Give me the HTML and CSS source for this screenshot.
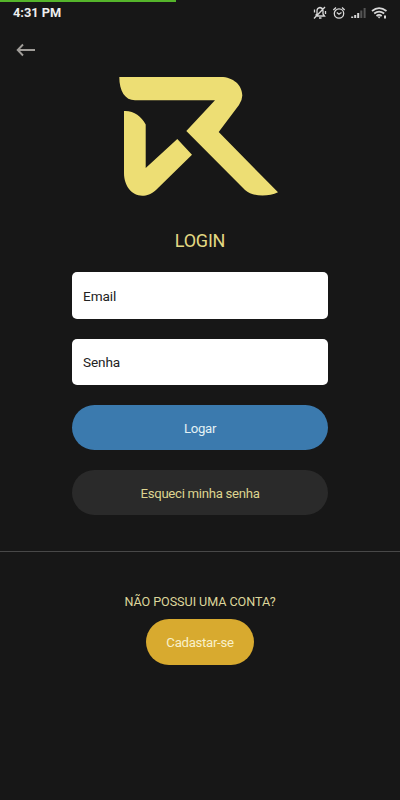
FILE: index.html
```html
<!DOCTYPE html>
<html lang="pt-BR">
<head>
<meta charset="utf-8">
<title>Login</title>
<link rel="stylesheet" href="styles.css">
</head>
<body>
<div class="progress"></div>
<header class="status">
  <span class="time">4:31 PM</span>
  <svg class="status-icons" width="76" height="16" viewBox="0 0 76 16" fill="none" stroke="#d8d8d8" stroke-width="1.3">
    <path d="M3.500 10.500L5 9V5.500Q5.200 3 8 2.500Q11 3 11 6V9L12.500 11H5M7 13H9.500M2 13.500L13 2M2.500 4.500V7.500M13.500 6V9"/>
    <circle cx="27" cy="8.500" r="4.700"/>
    <path d="M24.800 7.500L27 9.300L29.500 7.500M21.300 5L24 2.500M30 2.500L32.700 5"/>
    <path d="M40.200 13V11.500M43.200 13V10M46.200 13V8" stroke-width="2"/>
    <path d="M49.300 13V5.500M52.600 13V3" stroke="#555" stroke-width="2"/>
    <path d="M60 6Q67 .2 74.500 6M62.200 8.500Q67 4.600 72.200 8.500M64.500 11Q67 8.800 69.700 11" stroke-width="1.700"/>
    <path d="M65.500 11.500H68.700L67.100 13.500Z" fill="#d8d8d8" stroke="none"/>
    <path d="M73 10.500V13.500" stroke-width="2"/>
  </svg>
</header>
<nav class="nav">
  <svg width="20" height="14" viewBox="0 0 20 14" fill="none" stroke="#a09d99" stroke-width="1.900"><path d="M7 1.500L1.700 7L7 12.500M1.500 7H19"/></svg>
</nav>
<main class="main">
  <svg class="logo" width="160" height="120" viewBox="0 0 160 120" fill="#edde74">
    <path d="M.3 0H102C114 0 123.300 8 123.300 18.500Q123.300 23 120 28L99.700 55L159 115.300C149 120 134 120 126 113L67.300 54L96 23.300H16C6 23.300.3 14 .3 0Z"/>
    <path d="M5 34C15 33.500 22 39 26.700 47.500V91L58.300 62L73 77.700L37 113C32 117.500 28 118.700 23.300 118.700C13 118.700 5 109 5 96Z"/>
  </svg>
  <h1 class="title">LOGIN</h1>
  <form class="form">
    <div class="field">Email</div>
    <div class="field">Senha</div>
    <div class="btn btn-login">Logar</div>
    <div class="btn btn-forgot">Esqueci minha senha</div>
  </form>
</main>
<footer class="signup">
  <p class="question">NÃO POSSUI UMA CONTA?</p>
  <div class="btn btn-signup">Cadastar-se</div>
</footer>
</body>
</html>
```
FILE: styles.css
```css
* { box-sizing: border-box; }
body {
  margin: 0;
  height: 800px;
  background: #171717;
  font-family: Roboto, sans-serif;
  font-size: 13px;
  overflow: hidden;
}
svg { display: block; }
.progress { width: 176px; height: 2px; background: #55b52b; }
.status {
  height: 22px;
  display: flex;
  align-items: center;
  justify-content: space-between;
  padding: 0 12px 0 13px;
}
.time { color: #eee; font-size: 12.800px; font-weight: 700; margin-top: -1px; }
.nav { height: 53px; padding: 19px 0 0 16px; }
.main { display: flex; flex-direction: column; align-items: center; }
.logo { margin-right: 2px; }
.title {
  margin: 33px 0 20px;
  color: #e3d983;
  font-size: 18px;
  font-weight: 400;
  line-height: 22px;
  letter-spacing: -.2px;
}
.form { width: 256px; }
.field {
  height: 46.500px;
  margin-bottom: 20px;
  padding: 0 11px;
  border-radius: 5px;
  background: #fff;
  color: #222;
  font-size: 13.600px;
  letter-spacing: -.1px;
  line-height: 48px;
}
.field + .field { line-height: 47px; }
.btn {
  height: 45px;
  border-radius: 23px;
  text-align: center;
  line-height: 48px;
  font-size: 13.200px;
  letter-spacing: -.3px;
}
.btn-login { background: #3b7aae; color: #e4f2f5; line-height: 47px; }
.btn-forgot { margin-top: 20.400px; background: #2a2a2a; color: #ddd490; }
.signup {
  margin-top: 35.600px;
  border-top: 1px solid #484848;
  display: flex;
  flex-direction: column;
  align-items: center;
}
.question { margin: 41px 0 9.500px; color: #ddd69b; font-size: 12.600px; letter-spacing: -.06px; line-height: 17px; }
.btn-signup { width: 108px; height: 45.500px; background: #d8aa2f; color: #f8f1cb; }
```
